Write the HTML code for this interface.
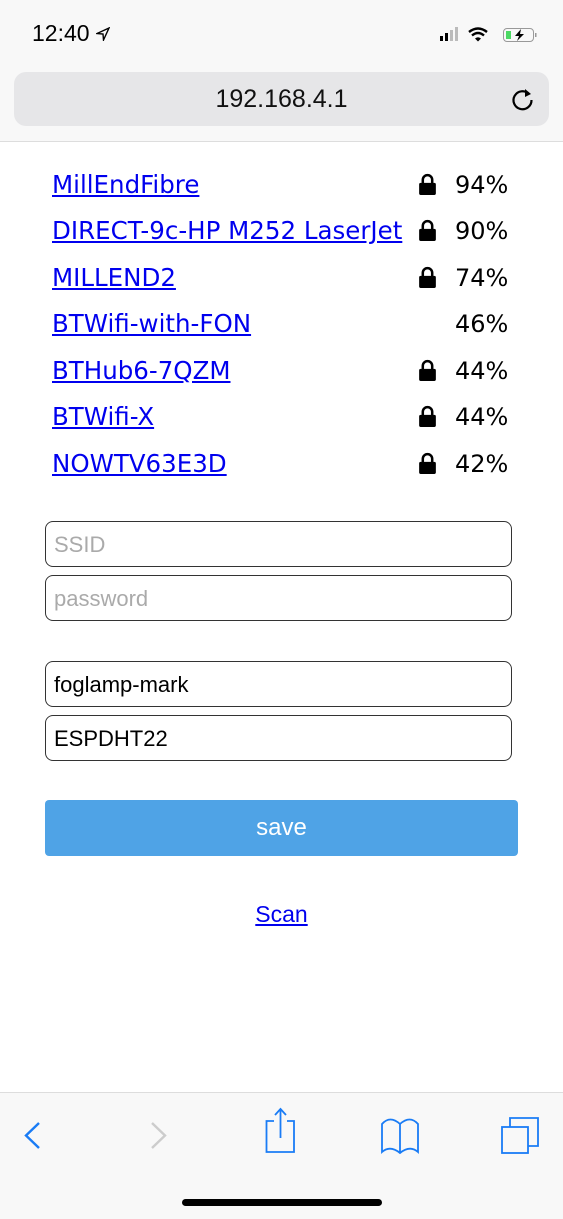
<!DOCTYPE html>
<html><head><meta charset="utf-8"><style>
body{margin:0;width:563px;height:1218px;position:relative;background:#fff;font-family:"Liberation Sans",sans-serif;overflow:hidden}
.top{position:absolute;left:0;top:0;width:563px;height:141px;background:#f8f8f8;border-bottom:1px solid #ddd}
.time{position:absolute;left:32px;top:20px;font-size:23px;font-weight:500;color:#000}
.url{position:absolute;left:14px;top:72px;width:535px;height:54px;border-radius:12px;background:#e6e6e8;text-align:center;line-height:54px;font-size:25px;color:#111}
.row{position:absolute;left:52px;font-family:"DejaVu Sans",sans-serif;font-size:24.5px;height:30px;line-height:30px;white-space:nowrap}
.row a{color:#0000ee;text-decoration:underline}
.pct{position:absolute;left:455px;font-family:"DejaVu Sans",sans-serif;font-size:24px;height:30px;line-height:30px;color:#000}
.lock{position:absolute;left:418px;width:19px;height:23px}
.inp{position:absolute;left:45px;width:457px;height:44px;border:1px solid #333;border-radius:8px;font-size:22px;line-height:46px;padding-left:8px;box-sizing:content-box}
.ph{color:#aaa}
.btn{position:absolute;left:45px;top:800px;width:473px;height:56px;background:#4fa3e6;border-radius:4px;color:#fff;text-align:center;line-height:56px;font-size:24px}
.scan{position:absolute;left:0;width:563px;top:901px;text-align:center;font-size:23px}
.scan a{color:#0000ee}
.bot{position:absolute;left:0;top:1092px;width:563px;height:126px;background:#f8f8f8;border-top:1px solid #ddd}
</style></head><body>
<div class="top">
<div class="time">12:40 <svg width="14" height="14" viewBox="0 0 14 14" style="vertical-align:0"><path d="M13 1 L1 6.5 L7 7 L7.5 13 Z" fill="none" stroke="#000" stroke-width="1.4"/></svg></div>
<svg style="position:absolute;left:440px;top:26px" width="100" height="18" viewBox="0 0 100 18">
<rect x="0" y="10" width="3" height="5" fill="#000"/><rect x="5" y="7" width="3" height="8" fill="#000"/><rect x="10" y="4" width="3" height="11" fill="#bbb"/><rect x="15" y="1" width="3" height="14" fill="#bbb"/>
<path d="M29 6 Q38 -1 47 6" stroke="#000" stroke-width="2.4" fill="none"/><path d="M32 9.5 Q38 4.5 44 9.5" stroke="#000" stroke-width="2.4" fill="none"/><path d="M35 12.5 L38 15.5 L41 12.5 Q38 10 35 12.5Z" fill="#000"/>
<rect x="63.5" y="2.5" width="30" height="13" rx="3.5" fill="none" stroke="#999"/><rect x="66" y="5" width="5" height="8" fill="#4cd964"/><path d="M81 3 L75 10 L79 10 L77 15 L84 8 L80 8 Z" fill="#000"/><rect x="95" y="7" width="1.5" height="4" fill="#999"/></svg>
<div class="url">192.168.4.1</div>
<svg style="position:absolute;left:510px;top:86px" width="26" height="28" viewBox="0 0 26 28"><path d="M19 8 A9 9 0 1 0 21.5 14" fill="none" stroke="#000" stroke-width="2.2"/><path d="M15 3 L21 8 L15 11 Z" fill="#000"/></svg>
</div>

<div class="row" style="top:170px"><a>MillEndFibre</a></div>
<div class="row" style="top:216px"><a>DIRECT-9c-HP M252 LaserJet</a></div>
<div class="row" style="top:263px"><a>MILLEND2</a></div>
<div class="row" style="top:309px"><a>BTWifi-with-FON</a></div>
<div class="row" style="top:356px"><a>BTHub6-7QZM</a></div>
<div class="row" style="top:402px"><a>BTWifi-X</a></div>
<div class="row" style="top:449px"><a>NOWTV63E3D</a></div>

<div class="pct" style="top:170px">94%</div>
<div class="pct" style="top:216px">90%</div>
<div class="pct" style="top:263px">74%</div>
<div class="pct" style="top:309px">46%</div>
<div class="pct" style="top:356px">44%</div>
<div class="pct" style="top:402px">44%</div>
<div class="pct" style="top:449px">42%</div>

<svg width="0" height="0" style="position:absolute"><defs><g id="lk"><path d="M4.5 10 V6.5 A4.5 4.5 0 0 1 13.5 6.5 V10" fill="none" stroke="#000" stroke-width="2.4"/><rect x="1" y="9.5" width="16" height="11.5" rx="1.5" fill="#000"/></g></defs></svg>
<svg class="lock" style="top:173px" viewBox="0 0 18 22"><use href="#lk"/></svg>
<svg class="lock" style="top:219px" viewBox="0 0 18 22"><use href="#lk"/></svg>
<svg class="lock" style="top:266px" viewBox="0 0 18 22"><use href="#lk"/></svg>
<svg class="lock" style="top:359px" viewBox="0 0 18 22"><use href="#lk"/></svg>
<svg class="lock" style="top:405px" viewBox="0 0 18 22"><use href="#lk"/></svg>
<svg class="lock" style="top:452px" viewBox="0 0 18 22"><use href="#lk"/></svg>

<div class="inp ph" style="top:521px">SSID</div>
<div class="inp ph" style="top:575px">password</div>
<div class="inp" style="top:661px">foglamp-mark</div>
<div class="inp" style="top:715px">ESPDHT22</div>
<div class="btn">save</div>
<div class="scan"><a style="text-decoration:underline">Scan</a></div>

<div class="bot">
<svg style="position:absolute;left:0;top:0" width="563" height="126" viewBox="0 0 563 126">
<path d="M39 30 L26 42.5 L39 55" fill="none" stroke="#1a7cf5" stroke-width="2.4"/>
<path d="M152 30 L165 42.5 L152 55" fill="none" stroke="#ccc" stroke-width="2.4"/>
<g fill="none" stroke="#1a7cf5" stroke-width="1.8">
<path d="M274 28 H266.5 V59 H294 V28 H287"/><path d="M280.5 16 V45"/><path d="M275 22 L280.5 16 L286 22"/>
<path d="M382 31 Q390 22 400 31 Q410 22 418 31 V59 Q410 52 400 60 Q390 52 382 59 Z M400 31 V60"/>
<rect x="502" y="34" width="26" height="26"/><path d="M510 34 V25 H538 V53 H528"/>
</g>
</svg>
<div style="position:absolute;left:182px;top:106px;width:200px;height:7px;border-radius:4px;background:#000"></div>
</div>
</body></html>
